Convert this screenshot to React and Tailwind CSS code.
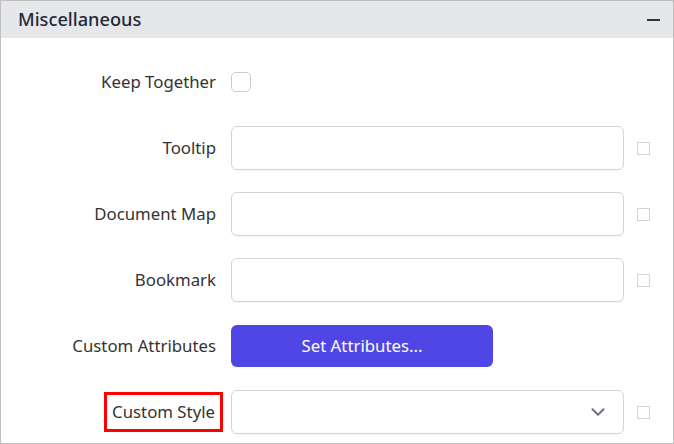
import { ChevronDown } from 'lucide-react'

const font = { fontFamily: '"Noto Sans", "Liberation Sans", sans-serif' }

const Row = ({ label, children, mark, highlight }) => (
    <div className="grid grid-cols-[215px_393px_13px] gap-x-[15px] items-center h-[44px]">
        <div className="flex justify-end text-[16.8px] text-[#333333]">
            {highlight ? (
                <span className="border-[3px] border-[#ff0000] px-[5px] py-[6px] -mx-[7px] leading-[22px]">
                    {label}
                </span>
            ) : (
                <span className="leading-[22px]">{label}</span>
            )}
        </div>
        {children}
        {mark && (
            <div className="-ml-[2px] w-[13px] h-[13px] border border-[#d4d4d8] bg-white" />
        )}
    </div>
)

const TextBox = () => (
    <div className="h-[44px] rounded-[6px] border border-[#d1d5db] bg-white shadow-[0_1px_1px_rgba(0,0,0,0.04)]" />
)

export default function App() {
    return (
        <div
            className="w-[674px] h-[444px] border border-[#bfbfbf] bg-white flex flex-col overflow-hidden"
            style={font}
        >
            {/* Section header */}
            <div className="h-[37px] bg-[#e5e7eb] flex items-center justify-between pl-[17px] pr-[13px]">
                <span className="text-[18.2px] font-medium text-[#1f2937]">
                    Miscellaneous
                </span>
                <span className="w-[13px] h-[2px] bg-[#2d3142]" />
            </div>

            <div className="flex flex-col gap-[22px] pt-[22px]">
                <Row label="Keep Together">
                    <div className="w-[20px] h-[20px] rounded-[5px] border border-[#cbcbd2] bg-white" />
                </Row>
                <Row label="Tooltip" mark>
                    <TextBox />
                </Row>
                <Row label="Document Map" mark>
                    <TextBox />
                </Row>
                <Row label="Bookmark" mark>
                    <TextBox />
                </Row>
                <Row label="Custom Attributes">
                    <button className="w-[262px] h-[42px] rounded-[6px] bg-[#4f46e5] text-white text-[16.8px]">
                        Set Attributes...
                    </button>
                </Row>
                <Row label="Custom Style" mark highlight>
                    <div className="h-[44px] rounded-[6px] border border-[#d1d5db] bg-white flex items-center justify-end pr-[14px] shadow-[0_1px_1px_rgba(0,0,0,0.04)]">
                        <ChevronDown size={22} strokeWidth={2.2} className="text-[#6b7280]" />
                    </div>
                </Row>
            </div>
        </div>
    )
}
